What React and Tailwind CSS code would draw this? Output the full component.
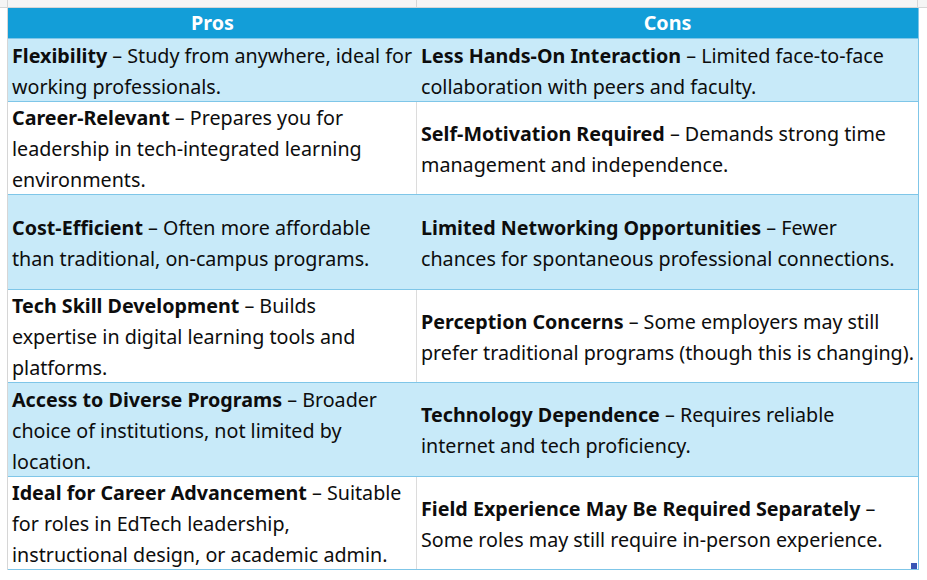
import React from 'react'

const rows = [
  {
    h: 'h-[63px]',
    fill: true,
    pros: [['Flexibility', ' – Study from anywhere, ideal for'], 'working professionals.'],
    cons: [['Less Hands-On Interaction', ' – Limited face-to-face'], 'collaboration with peers and faculty.'],
  },
  {
    h: 'h-[93px]',
    fill: false,
    pros: [['Career-Relevant', ' – Prepares you for'], 'leadership in tech-integrated learning', 'environments.'],
    cons: [['Self-Motivation Required', ' – Demands strong time'], 'management and independence.'],
  },
  {
    h: 'h-[95px]',
    fill: true,
    pros: [['Cost-Efficient', ' – Often more affordable'], 'than traditional, on-campus programs.'],
    cons: [['Limited Networking Opportunities', ' – Fewer'], 'chances for spontaneous professional connections.'],
  },
  {
    h: 'h-[93px]',
    fill: false,
    pros: [['Tech Skill Development', ' – Builds'], 'expertise in digital learning tools and', 'platforms.'],
    cons: [['Perception Concerns', ' – Some employers may still'], 'prefer traditional programs (though this is changing).'],
  },
  {
    h: 'h-[94px]',
    fill: true,
    pros: [['Access to Diverse Programs', ' – Broader'], 'choice of institutions, not limited by', 'location.'],
    cons: [['Technology Dependence', ' – Requires reliable'], 'internet and tech proficiency.'],
  },
  {
    h: 'h-[93px]',
    fill: false,
    pros: [['Ideal for Career Advancement', ' – Suitable'], 'for roles in EdTech leadership,', 'instructional design, or academic admin.'],
    cons: [['Field Experience May Be Required Separately', ' –'], 'Some roles may still require in-person experience.'],
  },
]

function Cell({ lines, className }) {
  return (
    <div className={`flex flex-col justify-center px-[4px] pt-[1px] ${className}`}>
      {lines.map((line, i) => (
        <div key={i} className="whitespace-nowrap leading-[31px]">
          {Array.isArray(line) ? (
            <>
              <span className="font-bold">{line[0]}</span>
              {line[1]}
            </>
          ) : (
            line
          )}
        </div>
      ))}
    </div>
  )
}

export default function App() {
  return (
    <div className="w-[927px] h-[580px] bg-white overflow-hidden text-[19.7px] text-[#0d0d0d] font-['Noto_Sans',sans-serif]">
      <div className="h-[8px] flex bg-[#f5f5f5] border-b border-[#d6d6d6]">
        <div className="w-[8px] border-r border-[#d6d6d6]"></div>
        <div className="w-[409px] border-r border-[#d6d6d6]"></div>
        <div className="w-[501px] border-r border-[#d6d6d6]"></div>
      </div>
      <div className="flex">
        <div className="w-[8px] border-r border-[#d6d6d6]"></div>
        <div className="relative w-[911px] border-r border-[#7fc6e8]">
          <div className="flex h-[30px] bg-[#139ed8] text-white font-bold">
            <div className="w-[409px] flex items-center justify-center">Pros</div>
            <div className="flex-1 flex items-center justify-center">Cons</div>
          </div>
          {rows.map((row, i) => (
            <div
              key={i}
              className={`flex border-t border-[#7fc6e8] ${row.h} ${row.fill ? 'bg-[#c8eaf9]' : 'bg-white'}`}
            >
              <Cell
                lines={row.pros}
                className={`w-[409px] ${row.fill ? '' : 'border-r border-[#dcdcdc]'}`}
              />
              <Cell lines={row.cons} className="flex-1" />
            </div>
          ))}
          <div className="border-t border-[#7fc6e8]"></div>
          <div className="absolute right-[1px] bottom-[1px] w-[6px] h-[6px] bg-[#3a55b4]"></div>
        </div>
        <div className="flex-1"></div>
      </div>
    </div>
  )
}
